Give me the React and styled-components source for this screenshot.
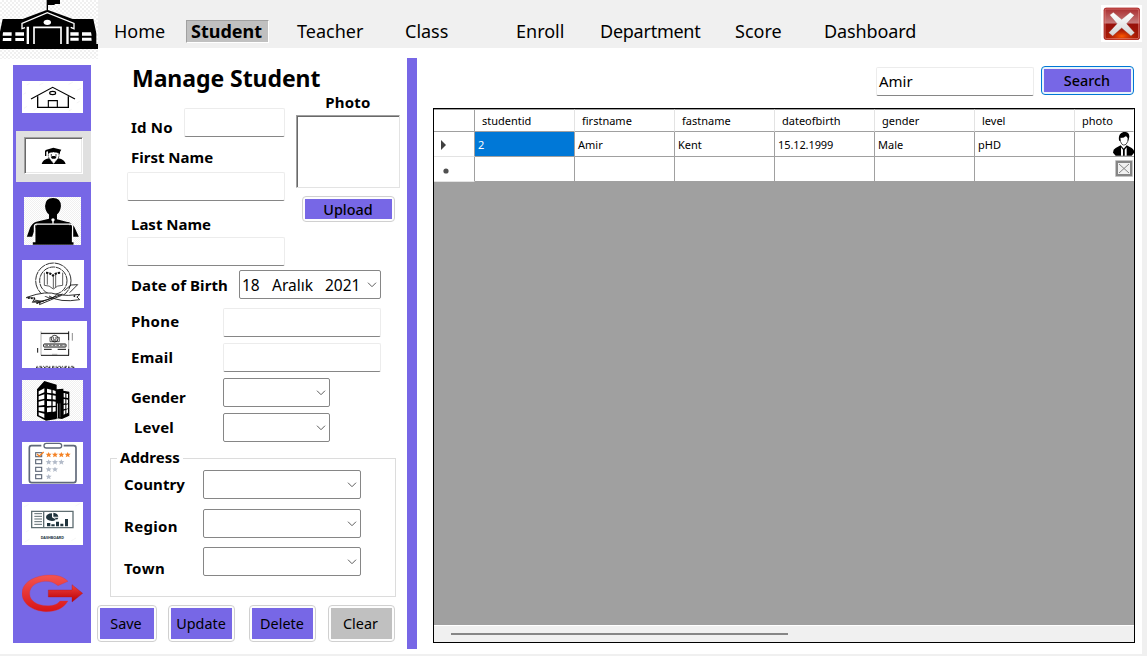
import React from "react";
import styled, { createGlobalStyle, css } from "styled-components";

const violet = "#7767e6";

const Global = createGlobalStyle`
  * { box-sizing: border-box; }
  body {
    margin: 0;
    background: #f0f0f0;
    color: #000;
    font-family: "Noto Sans", "Open Sans", sans-serif;
    overflow: hidden;
  }
  svg { display: block; }
`;

const checker = css`
  background: repeating-conic-gradient(#f0f0f0 0% 25%, #fff 0% 50%) 0 0 /
    ${(p) => p.$cell ?? 4}px ${(p) => p.$cell ?? 4}px;
`;

const Window = styled.div`
  width: 1147px;
  height: 656px;
  display: flex;
`;

const LeftRail = styled.div`
  width: 98px;
  height: 654px;
  flex: none;
  background: #fff;
`;

const Logo = styled.div`
  ${checker}
  width: 98px;
  height: 59px;
`;

const Sidebar = styled.nav`
  width: 78px;
  height: 578px;
  margin: 6px 0 0 13px;
  background: ${violet};
  display: flex;
  flex-direction: column;
`;

const Tile = styled.div`
  flex: none;
  width: ${(p) => p.$w}px;
  height: ${(p) => p.$h}px;
  margin-top: ${(p) => p.$top}px;
  margin-left: ${(p) => p.$left ?? 9}px;
  background: ${(p) => p.$bg ?? "#fff"};
  ${(p) => p.$cell && checker}
`;

const ActiveTile = styled.div`
  flex: none;
  width: 75px;
  height: 51px;
  margin: 18px 0 0 3px;
  padding: 6px 8px 8px;
  background: #e0e0e0;
`;

const SunkenTile = styled.div`
  width: 59px;
  height: 37px;
  background: #fff;
  border: 1px solid;
  border-color: #a0a0a0 #fff #fff #a0a0a0;
  box-shadow: inset 1px 1px 0 #696969, inset -1px -1px 0 #e8e8e8;
`;

const Main = styled.div`
  flex: 1;
  display: flex;
  flex-direction: column;
`;

const Header = styled.header`
  height: 48px;
  display: flex;
  padding-left: 16px;
`;

const NavItem = styled.div`
  width: ${(p) => p.$w}px;
  height: 22px;
  margin-top: 20px;
  font-size: 18px;
  line-height: 22px;
  letter-spacing: ${(p) => p.$ls ?? 0}px;
  white-space: nowrap;
`;

const ActiveNav = styled.div`
  width: 83px;
  height: 23px;
  margin: 20px 28px 0 0;
  padding-left: 4px;
  background: #c0c0c0;
  border: 1px solid;
  border-color: #a0a0a0 #fff #fff #a0a0a0;
  font-size: 18px;
  font-weight: 700;
  line-height: 20px;
`;

const CloseButton = styled.div`
  width: 41px;
  height: 37px;
  margin-top: 5px;
  padding: 2px;
  background: #fff;
`;

const Body = styled.div`
  width: 1044px;
  height: 606px;
  background: #fff;
  display: flex;
`;

const FormPanel = styled.section`
  width: 309px;
  flex: none;
  display: flex;
  flex-direction: column;
`;

const Title = styled.h1`
  margin: 0;
  height: 44px;
  padding: 14px 0 0 34px;
  font-size: 23px;
  font-weight: 700;
  line-height: 32px;
  letter-spacing: -0.06px;
`;

const TopFields = styled.div`
  display: flex;
  height: 178px;
`;

const NameColumn = styled.div`
  width: 187px;
  margin-right: 11px;
  padding-left: 29px;
  display: flex;
  flex-direction: column;
`;

const PhotoColumn = styled.div`
  width: 104px;
  display: flex;
  flex-direction: column;
  align-items: center;
`;

const Row = styled.div`
  display: flex;
  align-items: flex-start;
  height: ${(p) => p.$h}px;
  padding-left: ${(p) => p.$left ?? 33}px;
  padding-top: ${(p) => p.$top ?? 0}px;
`;

const Label = styled.label`
  flex: none;
  width: ${(p) => (p.$w ? p.$w + "px" : "auto")};
  margin-top: ${(p) => p.$top ?? 0}px;
  margin-left: ${(p) => p.$left ?? 0}px;
  height: 20px;
  font-size: 15px;
  font-weight: 700;
  line-height: 20px;
  letter-spacing: ${(p) => p.$ls ?? 0}px;
  white-space: nowrap;
`;

const Input = styled.div`
  flex: none;
  width: ${(p) => p.$w}px;
  height: 29px;
  margin-top: ${(p) => p.$top ?? 0}px;
  padding-left: 2px;
  border: 1px solid #ececec;
  border-bottom-color: #868686;
  border-radius: 2px;
  background: #fff;
  font-size: 15px;
  line-height: 26px;
`;

const SelectBox = styled.div`
  flex: none;
  width: ${(p) => p.$w}px;
  height: 29px;
  margin-top: ${(p) => p.$top ?? 0}px;
  padding: 0 3px 0 2px;
  border: 1px solid #868686;
  border-radius: 2px;
  background: #fff;
  display: flex;
  align-items: center;
  font-size: 15.5px;
`;

const DatePart = styled.span`
  width: ${(p) => p.$w}px;
  white-space: nowrap;
`;

const Arrow = styled.svg`
  margin-left: auto;
`;

const PhotoBox = styled.div`
  width: 104px;
  height: 73px;
  margin-top: 3px;
  border: 1px solid;
  border-color: #a0a0a0 #e3e3e3 #e3e3e3 #a0a0a0;
  box-shadow: inset 1px 1px 0 #696969;
`;

const Button = styled.button`
  flex: none;
  width: ${(p) => p.$w}px;
  height: ${(p) => p.$h}px;
  margin: ${(p) => p.$m ?? "0"};
  padding: 2px;
  border: 1px solid ${(p) => (p.$focus ? "#0078d4" : "#d0d0d0")};
  border-radius: 4px;
  background: ${(p) => (p.$focus ? "#e8f3fc" : "#fdfdfd")};
  font-family: inherit;
  font-size: 14.4px;
  font-weight: ${(p) => p.$weight ?? 400};
  color: #000;
`;

const ButtonFace = styled.span`
  display: flex;
  align-items: center;
  justify-content: center;
  width: 100%;
  height: 100%;
  padding-right: ${(p) => p.$shift ?? 0}px;
  background: ${(p) => (p.$muted ? "#c0c0c0" : violet)};
`;

const AddressGroup = styled.fieldset`
  width: 286px;
  height: 149px;
  min-width: 0;
  margin: 0 0 0 12px;
  padding: 0;
  border: 1px solid #dcdcdc;
`;

const Legend = styled.legend`
  height: 20px;
  margin-left: 6px;
  padding: 0 3px;
  font-size: 15px;
  font-weight: 700;
  line-height: 18px;
`;

const Actions = styled.div`
  display: flex;
  margin: 8px 0 0 -1px;
`;

const Divider = styled.div`
  width: 10px;
  height: 591px;
  flex: none;
  margin-top: 10px;
  background: ${violet};
`;

const ResultsPanel = styled.section`
  width: 702px;
  margin-left: 16px;
  display: flex;
  flex-direction: column;
`;

const SearchBar = styled.div`
  height: 60px;
  padding-top: 18px;
  display: flex;
  align-items: flex-start;
  justify-content: flex-end;
`;

const GridFrame = styled.div`
  height: 535px;
  border: 1px solid #000;
  background: #a0a0a0;
  display: flex;
  flex-direction: column;
  overflow: hidden;
  font-size: 11px;
`;

const GridRow = styled.div`
  display: grid;
  grid-template-columns: 41px repeat(6, 100px) 59px;
  grid-template-rows: 100%;
  flex: none;
  height: ${(p) => p.$h}px;
  background: #fff;
`;

const HeaderCell = styled.div`
  border-top: 1px solid #a0a0a0;
  border-right: 1px solid ${(p) => (p.$corner ? "#a0a0a0" : p.$last ? "transparent" : "#e3e3e3")};
  border-bottom: 1px solid #a0a0a0;
  padding-left: 7px;
  line-height: 21px;
`;

const Cell = styled.div`
  border-right: 1px solid ${(p) => (p.$last ? "transparent" : "#a0a0a0")};
  border-bottom: 1px solid ${(p) => (p.$head ? "#e3e3e3" : "#a0a0a0")};
  padding: 2px 0 0 3px;
  line-height: 22px;
  white-space: nowrap;
  letter-spacing: ${(p) => p.$ls ?? 0}px;
  ${(p) => p.$selected && css`background: #0078d7; color: #fff;`}
  ${(p) => (p.$last || p.$head) && css`display: flex; align-items: center;`}
  ${(p) => p.$last && css`justify-content: flex-end; padding: 0; border-right: 0;`}
  ${(p) => p.$head && css`padding: 1px 0 0 6px;`}
`;

const ScrollTrack = styled.div`
  height: 17px;
  margin-top: auto;
  padding: 7px 0 0 17px;
  background: #f0f0f0;
  border-top: 1px solid #fff;
`;

const ScrollThumb = styled.div`
  width: 337px;
  height: 2px;
  background: #868686;
`;

const Chevron = () => (
  <Arrow width="10" height="6" viewBox="0 0 10 6" fill="none" stroke="#5c5c5c">
    <path d="M1 0.7 L5 4.7 L9 0.7" />
  </Arrow>
);

const Field = (props) => <SelectBox {...props}><Chevron /></SelectBox>;

const SchoolLogo = () => (
  <svg width="98" height="59" viewBox="0 0 294 177">
    <path fill="#000" d="M140 0h4v32h-4zM144 0h36v12h-16v3h-20zM8 57h60L142 29l76 28h62l9 43v32h5v15H0v-15h0V95z" />
    <path fill="none" stroke="#fff" strokeWidth="4" d="M75 83 66 86V70L142 38 222 70V86L212 82" />
    <path fill="#fff" d="M80 80h7v52h-7zM199 80h7v52h-7z" />
    <path fill="none" stroke="#fff" strokeWidth="5" d="M102 132V82h81v50" />
    <ellipse cx="142" cy="67" rx="11" ry="8" fill="#fff" />
    <path fill="#fff" d="M9 97h26v10H8zM46 97h26v10H46zM9 114h25v9H8zM46 114h26v9H46zM211 97h25v10h-25zM246 97h27l2 10h-29zM211 113h25v9h-25zM246 113h28l1 9h-29z" />
    <path fill="#000" d="M0 132h294v15H0z" />
  </svg>
);

const HouseIcon = () => (
  <svg width="61" height="32" viewBox="0 0 183 96" fill="none" stroke="#000" strokeWidth="3.4">
    <path stroke="#eee" strokeWidth="2" d="M4 40l8-5M14 12l9-5M52 12l12-6M140 10l12-6M165 28l12-6M6 82l9-6M35 88l10-6M140 90l9-5M164 66l9-5" />
    <path d="M27 54 92 19 159 54" />
    <path strokeWidth="4" d="M47 46V79H139V46" />
    <path d="M79 79V59H106V79" />
    <ellipse cx="92" cy="36" rx="9" ry="5" />
  </svg>
);

const GraduateIcon = () => (
  <svg width="57" height="35" viewBox="3 3 171 105">
    <path d="M65 39 88 32 112 38 108 45V50H72V43L67 44V57H63V43z" />
    <path fill="#fff" stroke="#000" strokeWidth="2" strokeDasharray="6 2" d="M74 48q14-6 30 0 4 12-7 23-8 6-16 0-11-10-7-23z" />
    <path d="M53 81q3-13 22-17l14 16 14-16q19 4 22 17z" />
    <path fill="#fff" d="M82 63q7 7 14 0l-2 10q-5 6-10 0z" />
    <path d="M80 59l6-2h6l6 2-4 6H84z" />
    <circle cx="82" cy="54" r="2" /><circle cx="96" cy="54" r="2" />
  </svg>
);

const TeacherIcon = () => (
  <svg width="57" height="48" viewBox="0 0 171 145">
    <path d="M63 27Q64 3 87 3 111 3 111 28 109 45 99 53V67l34 9q16 5 22 22l10 22H147l-6-24-4-16H37l-5 18-8 22H8L18 92q7-13 19-17l38-9V53Q64 44 63 27z" />
    <path d="M37 76h100v20H37z" />
    <path fill="none" stroke="#fff" strokeWidth="4" d="M31 137V87q1-5 7-5h101q6 0 7 5v50" />
    <path d="M34 91q0-6 6-6h98q6 0 6 6v46h5v7H26v-7h8z" />
    <circle cx="87" cy="69" r="5" fill="#fff" /><path fill="#fff" d="M85 72h4v9h-4z" />
  </svg>
);

const BookBadgeIcon = () => (
  <svg width="62" height="48" viewBox="0 0 186 144" fill="none" stroke="#111" strokeWidth="2.6">
    <circle cx="94" cy="62" r="53" strokeDasharray="26 2" />
    <circle cx="94" cy="62" r="41" strokeDasharray="18 2" />
    <path stroke="#444" d="M67 38v38q15-1 27 11 12-12 28-11V38M94 46v39M101 45v36M76 40v34" />
    <path strokeWidth="6" strokeDasharray="7 3" d="M72 38q12 0 21 9 9-9 22-9" />
    <path fill="#fff" d="M14 112q60-22 93-8 30 5 67-1l-9 8 8 8q-60 10-92-11" />
    <path d="M12 113l27 1-8 13q50-4 72-21M48 129l74-27M52 134l67-28M143 98l24-24-20 1-20 17M34 124l23 5M37 120l28 5" />
    <path strokeWidth="5" strokeDasharray="5 4" d="M18 114l21 2M43 129l11 2M155 107l8 5" />
  </svg>
);

const EnrollIcon = () => (
  <svg width="65" height="47" viewBox="0 0 195 141" fill="none" stroke="#111" strokeWidth="2">
    <path stroke="#888" d="M57 31v72M57 38h84" />
    <path strokeWidth="3" d="M57 37h84M57 103h84M140 31v27M140 84v19M47 81v14" />
    <path stroke="#888" d="M140 58v26" />
    <path stroke="#555" d="M151 36v23" />
    <circle cx="98" cy="53" r="10" strokeWidth="2.6" /><path d="M84 62V49h4M112 62V49h-4M84 62h28" />
    <circle cx="94" cy="51" r="1.5" /><circle cx="102" cy="51" r="1.5" />
    <path strokeWidth="3" d="M93 57h10" />
    <rect x="65" y="69" width="67" height="9" rx="2" strokeWidth="3" />
    <path strokeWidth="2" strokeDasharray="8 3" d="M70 73h58" />
    <path strokeWidth="3" d="M66 85h23M107 85h25" />
    <path stroke="#888" d="M90 100h16" />
    <path strokeWidth="3" strokeDasharray="5 3 2 3 6 5" d="M42 139h117" />
    <path strokeWidth="2" strokeDasharray="3 5 7 4" d="M44 136h113" />
  </svg>
);

const BuildingIcon = () => (
  <svg width="61" height="41" viewBox="0 0 183 123">
    <path d="M45 28 67 3 104 14V117L72 122 45 108zM104 28l20-2V32l18 3v72l-22 10-16-2z" />
    <path fill="#fff" d="M50 34l17-9v12l-17 7zM50 49l17-6v13l-17 4zM50 65l17-4v14l-17 2zM50 82l17-1v14l-17-3zM50 97l17 4v13l-17-8zM75 26l13 3v11l-13-2zM92 30l9 3v9l-9-2zM75 43l13 2v13l-13-1zM92 46l9 1v12l-9-1zM75 63l13 1v13l-13 1zM92 64l9 1v12l-9 1zM75 83l13-1v13l-13 2zM92 82l9-1v13l-9 2zM125 39l5 1v13l-5-1zM133 41l5 1v12l-5-1zM125 57l5 1v12l-5 1zM133 58l5 1v11l-5 1zM125 75l5-1v12l-5 2zM133 74l5-1v12l-5 2zM125 92l5-2v11l-5 3zM133 89l5-2v11l-5 3zM106 71l2-1v43l-2 1z" />
    <path stroke="#777" strokeWidth="2" d="M114 70v42" />
  </svg>
);

const star = "M0-8 2.5-3 9-2.5 4 2 6 8 0 4.5-6 8-4 2-9-2.5-2.5-3z";

const ScoreIcon = () => (
  <svg width="61" height="42" viewBox="0 0 183 126" fill="none" stroke="#606979" strokeWidth="4">
    <path d="M58 11H28q-6 0-6 7v96q0 8 7 8h126q7 0 7-8V18q0-7-7-7h-30" strokeWidth="5" />
    <rect x="66" y="4" width="53" height="14" rx="7" />
    {[32, 53, 76, 98].map((y) => <rect key={y} x="41" y={y} width="18" height="12" strokeWidth="3.4" />)}
    <path stroke="#f48225" d="M45 36l7 6 13-12" />
    <g stroke="none">
      {[[4, 38], [3, 60], [2, 82], [1, 104]].map(([n, y], i) =>
        Array.from({ length: n }, (_, j) => (
          <path key={`${i}-${j}`} d={star} fill={i ? "#b3bbc9" : "#f48225"} transform={`translate(${80 + j * 19} ${y})`} />
        ))
      )}
    </g>
  </svg>
);

const DashboardIcon = () => (
  <svg width="61" height="43" viewBox="0 0 183 129">
    <path fill="none" stroke="#f3f3f3" strokeWidth="2" d="M6 15l14-8M160 12l15-8M8 120l14-8M148 116l14-8M12 90l8-5" />
    <path fill="none" stroke="#5f6e72" strokeWidth="4" d="M29 28H153V77H29zM65 28v49" />
    <path stroke="#5f6e72" strokeWidth="3" d="M37 35h23M37 43h23M37 51h23M37 59h23M37 67h23" />
    <path fill="#20343d" d="M90 34V46l12 7q-6 4-12 4-17-1-18-11 1-11 18-12zM94 32q14 2 15 12H94zM96 47h13q-1 3-4 6zM75 63h10v10H75zM88 67h10v6H88zM102 59h9v14h-9zM115 65h9v8h-9zM129 51h9v22h-9z" />
    <text x="91" y="111" textAnchor="middle" fontSize="8" fontWeight="700" fill="#20343d" textLength="70" lengthAdjust="spacingAndGlyphs">DASHBOARD</text>
  </svg>
);

const ExitIcon = () => (
  <svg width="61" height="45" viewBox="0 0 183 135">
    <defs>
      <linearGradient id="ring" x2="0" y2="1"><stop stopColor="#f45450" /><stop offset="1" stopColor="#d81418" /></linearGradient>
      <linearGradient id="arrow" x2="0" y2="1"><stop stopColor="#f0413c" /><stop offset="1" stopColor="#b80006" /></linearGradient>
    </defs>
    <path fill="url(#ring)" stroke="#c93650" strokeWidth="1" d="M138 34C118 14 94 14 68 16 24 22 0 43 0 70c0 31 32 54 72 55 31 0 51-9 66-32H114C104 105 92 107 76 107 44 107 24 92 23 72 22 50 42 36 68 34c16-1 27 3 40 13z" />
    <path fill="url(#arrow)" stroke="#b30d19" strokeWidth="1" d="M79 60h71V44l32 26-32 26V81H79z" />
  </svg>
);

const CloseIcon = () => (
  <svg width="37" height="33" viewBox="0 0 111 99">
    <defs>
      <linearGradient id="gloss" x2="0" y2="1"><stop stopColor="#a8292b" /><stop offset=".48" stopColor="#c77b7c" /><stop offset=".5" stopColor="#98100a" /><stop offset="1" stopColor="#a51a05" /></linearGradient>
      <radialGradient id="glow" cx=".5" cy=".8" r=".5"><stop stopColor="#ff5a00" /><stop offset="1" stopColor="#b51b05" stopOpacity="0" /></radialGradient>
      <linearGradient id="cross" x2="0" y2="1"><stop stopColor="#fff" /><stop offset="1" stopColor="#d4d4d4" /></linearGradient>
    </defs>
    <rect x="3" y="3" width="107" height="95" rx="7" fill="url(#gloss)" stroke="#a30b0b" strokeWidth="2" />
    <rect x="3" y="45" width="107" height="53" fill="url(#glow)" />
    <rect x="6" y="6" width="101" height="89" rx="5" fill="none" stroke="#e58a80" strokeWidth="2" />
    <path fill="url(#cross)" stroke="#8d3028" strokeWidth="1" d="M20 24 31 16 56 37 82 16 94 25 71 50 95 77 84 87 56 63 29 87 17 77 42 50z" />
  </svg>
);

const PersonIcon = () => (
  <svg width="21" height="24" viewBox="0 0 63 72">
    <path d="M18 24Q15 5 31 0q18-2 18 14l-3 12H18zM0 62q0-10 8-14l15-8 9 10 9-10 15 8q8 5 8 14l-8 9H8z" />
    <path fill="#fff" stroke="#000" strokeWidth="2" d="M21 17q13 0 18-6l6 7q1 13-6 19-7 5-12 0-6-6-6-20z" />
    <path fill="#fff" d="M24 46l6 7v18h-6zM41 46l-6 7v18h6z" />
    <path stroke="#000" strokeWidth="2" d="M32.5 50v21" />
  </svg>
);

const MissingImage = () => (
  <svg width="19" height="18" viewBox="0 0 19 18" fill="none" stroke="#858585">
    <path stroke="#c4c4c4" d="M.5 .5h17v16H.5z" />
    <path fill="#f1f1f1" strokeWidth="2" d="M2 2h14v13H2z" />
    <path d="M4 4l10 9M14 4l-10 9" />
  </svg>
);

const columns = ["studentid", "firstname", "fastname", "dateofbirth", "gender", "level"];
const student = ["2", "Amir", "Kent", "15.12.1999", "Male", "pHD"];

export default function App() {
  return (
    <Window>
      <Global />
      <LeftRail>
        <Logo><SchoolLogo /></Logo>
        <Sidebar>
          <Tile $w={61} $h={32} $top={16}><HouseIcon /></Tile>
          <ActiveTile><SunkenTile><GraduateIcon /></SunkenTile></ActiveTile>
          <Tile $w={57} $h={48} $top={15} $left={11} $cell={2}><TeacherIcon /></Tile>
          <Tile $w={62} $h={48} $top={15}><BookBadgeIcon /></Tile>
          <Tile $w={65} $h={47} $top={13}><EnrollIcon /></Tile>
          <Tile $w={61} $h={41} $top={12} $cell={2}><BuildingIcon /></Tile>
          <Tile $w={61} $h={42} $top={21}><ScoreIcon /></Tile>
          <Tile $w={61} $h={43} $top={18}><DashboardIcon /></Tile>
          <Tile $w={61} $h={45} $top={25} $bg="transparent"><ExitIcon /></Tile>
        </Sidebar>
      </LeftRail>
      <Main>
        <Header>
          <NavItem $w={72}>Home</NavItem>
          <ActiveNav>Student</ActiveNav>
          <NavItem $w={108}>Teacher</NavItem>
          <NavItem $w={111}>Class</NavItem>
          <NavItem $w={84}>Enroll</NavItem>
          <NavItem $w={135} $ls={-0.25}>Department</NavItem>
          <NavItem $w={89}>Score</NavItem>
          <NavItem $w={277} $ls={-0.1}>Dashboard</NavItem>
          <CloseButton><CloseIcon /></CloseButton>
        </Header>
        <Body>
          <FormPanel>
            <Title>Manage Student</Title>
            <TopFields>
              <NameColumn>
                <Row $h={55} $left={4} $top={16}>
                  <Label $w={53} $top={9} $ls={0.2}>Id No</Label>
                  <Input $w={101} />
                </Row>
                <Label $left={4}>First Name</Label>
                <Input $w={158} $top={5} />
                <Label $left={4} $top={13}>Last Name</Label>
                <Input $w={158} $top={3} />
              </NameColumn>
              <PhotoColumn>
                <Label $ls={0.2}>Photo</Label>
                <PhotoBox />
                <Button $w={93} $h={26} $m="8px 0 0" $weight={500}><ButtonFace>Upload</ButtonFace></Button>
              </PhotoColumn>
            </TopFields>
            <Row $h={38}>
              <Label $w={108} $top={5} $ls={0.08}>Date of Birth</Label>
              <SelectBox $w={142}>
                <DatePart $w={30}>18</DatePart>
                <DatePart $w={53}>Aralık</DatePart>
                <DatePart $w={40}>2021</DatePart>
                <Chevron />
              </SelectBox>
            </Row>
            <Row $h={35}><Label $w={92} $top={3} $ls={0.25}>Phone</Label><Input $w={158} /></Row>
            <Row $h={35}><Label $w={92} $top={4} $ls={0.25}>Email</Label><Input $w={158} /></Row>
            <Row $h={35}><Label $w={92} $top={9}>Gender</Label><Field $w={107} /></Row>
            <Row $h={35} $left={36}><Label $w={89} $top={4} $ls={0.2}>Level</Label><Field $w={107} /></Row>
            <AddressGroup>
              <Legend>Address</Legend>
              <Row $h={41} $left={13} $top={2}><Label $w={79} $top={4} $ls={0.1}>Country</Label><Field $w={158} /></Row>
              <Row $h={38} $left={13}><Label $w={79} $top={7} $ls={0.3}>Region</Label><Field $w={158} /></Row>
              <Row $h={38} $left={13}><Label $w={79} $top={11} $ls={0.5}>Town</Label><Field $w={158} /></Row>
            </AddressGroup>
            <Actions>
              <Button $w={60} $h={37}><ButtonFace $shift={2}>Save</ButtonFace></Button>
              <Button $w={67} $h={37} $m="0 0 0 11px"><ButtonFace $shift={1}>Update</ButtonFace></Button>
              <Button $w={67} $h={37} $m="0 0 0 14px"><ButtonFace $shift={1}>Delete</ButtonFace></Button>
              <Button $w={67} $h={37} $m="0 0 0 12px"><ButtonFace $muted $shift={2}>Clear</ButtonFace></Button>
            </Actions>
          </FormPanel>
          <Divider />
          <ResultsPanel>
            <SearchBar>
              <Input $w={158} $top={1}>Amir</Input>
              <Button $w={93} $h={29} $m="0 1px 0 7px" $weight={500} $focus><ButtonFace $shift={1}>Search</ButtonFace></Button>
            </SearchBar>
            <GridFrame>
              <GridRow $h={23}>
                <HeaderCell $corner />
                {columns.map((name) => <HeaderCell key={name}>{name}</HeaderCell>)}
                <HeaderCell $last>photo</HeaderCell>
              </GridRow>
              <GridRow $h={25}>
                <Cell $head><svg width="6" height="10"><path fill="#404040" d="M1 0l5 5-5 5z" /></svg></Cell>
                {student.map((value, i) => <Cell key={value} $selected={i === 0} $ls={i === 3 ? -0.1 : 0}>{value}</Cell>)}
                <Cell $last><PersonIcon /></Cell>
              </GridRow>
              <GridRow $h={25}>
                <Cell $head><svg width="12" height="8"><circle cx="6" cy="5" r="2.6" fill="#505050" /></svg></Cell>
                {columns.map((name) => <Cell key={name} />)}
                <Cell $last><MissingImage /></Cell>
              </GridRow>
              <ScrollTrack><ScrollThumb /></ScrollTrack>
            </GridFrame>
          </ResultsPanel>
        </Body>
      </Main>
    </Window>
  );
}
